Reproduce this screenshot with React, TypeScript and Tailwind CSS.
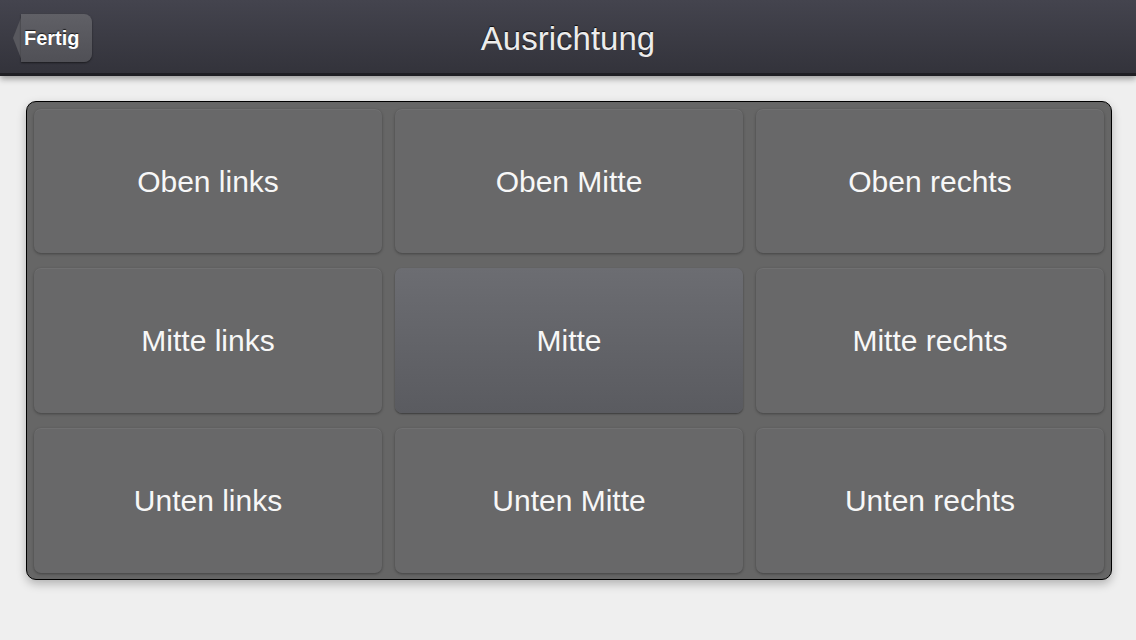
const cells = [
  'Oben links',
  'Oben Mitte',
  'Oben rechts',
  'Mitte links',
  'Mitte',
  'Mitte rechts',
  'Unten links',
  'Unten Mitte',
  'Unten rechts',
]

export default function App() {
  return (
    <div className="flex h-[640px] w-[1136px] flex-col overflow-hidden bg-[#efefef] font-['Liberation_Sans',Arial,sans-serif]">
      {/* Navigation bar */}
      <header className="relative z-10 flex h-[76px] shrink-0 items-center justify-center border-b-[3px] border-[#1f1f24] bg-gradient-to-b from-[#44444e] to-[#33333b] shadow-[0_3px_6px_rgba(0,0,0,0.35)]">
        <button className="absolute left-[12px] top-[14px] flex h-[48px] items-center">
          <svg width="10" height="48" viewBox="0 0 10 48" className="-mr-px">
            <path d="M10 1 L1 24 L10 47 Z" fill="#58585e" />
          </svg>
          <span className="flex h-[48px] items-center rounded-r-[8px] bg-gradient-to-b from-[#606066] to-[#505056] pl-[3px] pr-[12px] text-[20px] font-bold text-white shadow-[0_1px_2px_rgba(0,0,0,0.5)] [text-shadow:0_-1px_1px_rgba(0,0,0,0.7)]">
            Fertig
          </span>
        </button>
        <h1 className="pt-[4px] text-[33px] text-[#ececec] [text-shadow:0_-1px_1px_rgba(0,0,0,0.8)]">Ausrichtung</h1>
      </header>

      {/* Grid panel */}
      <div className="px-[26px] pt-[25px]">
        <div className="h-[479px] w-[1086px] rounded-[10px] border border-black bg-[#666666] px-[7px] pb-[9px] pt-[7px] shadow-[0_4px_10px_rgba(0,0,0,0.25)]">
          <div className="grid grid-cols-3 grid-rows-[144px_145px_145px] gap-x-[13px] gap-y-[15px]">
            {cells.map((label) =>
              label === 'Mitte' ? (
                <div
                  key={label}
                  className="flex items-center justify-center rounded-[7px] bg-gradient-to-b from-[#6c6d72] to-[#5a5b60] text-[30px] text-[#f7f7f7] shadow-[0_1px_2px_rgba(0,0,0,0.45)]"
                >
                  {label}
                </div>
              ) : (
                <div
                  key={label}
                  className="flex items-center justify-center rounded-[7px] bg-[#686869] text-[30px] text-[#f7f7f7] shadow-[0_1px_3px_rgba(0,0,0,0.35),inset_0_1px_0_rgba(255,255,255,0.06)]"
                >
                  {label}
                </div>
              ),
            )}
          </div>
        </div>
      </div>
    </div>
  )
}
